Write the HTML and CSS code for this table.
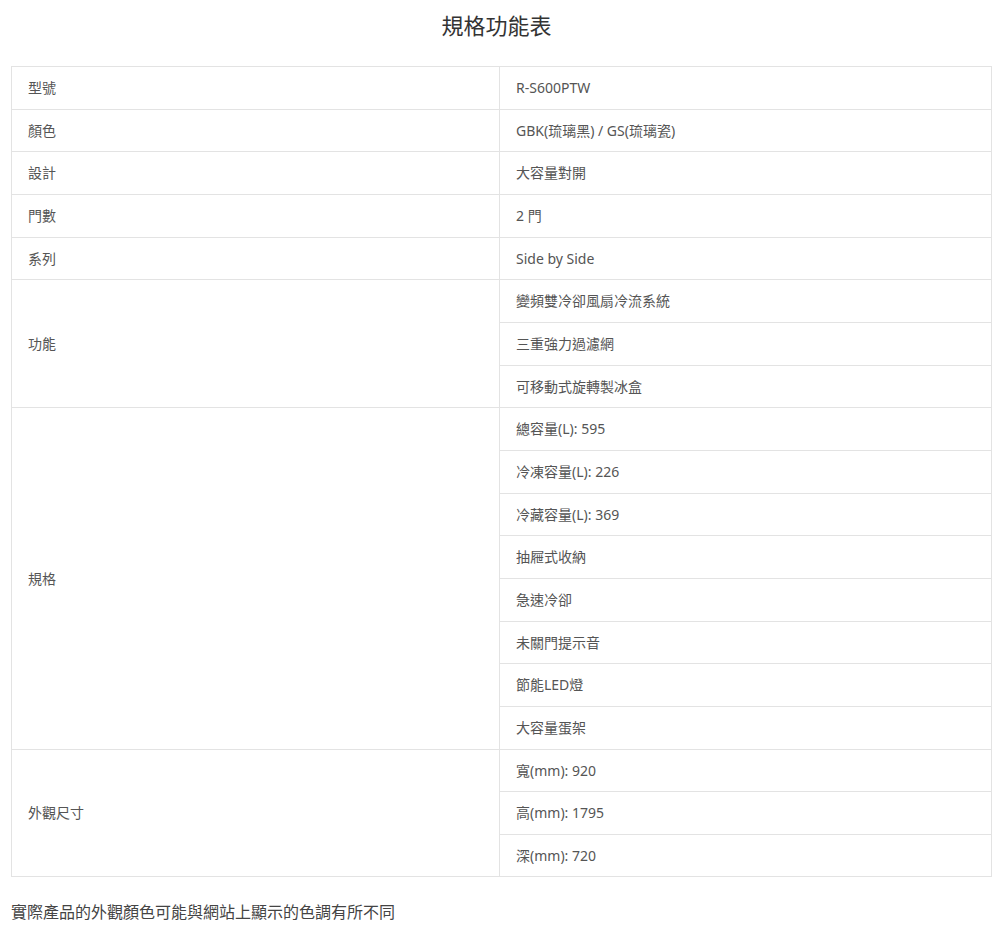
FILE: index.html
```html
<!DOCTYPE html>
<html lang="zh-Hant">
<head>
<meta charset="utf-8">
<title>規格功能表</title>
<link rel="stylesheet" href="styles.css">
</head>
<body>
<div class="page">
  <h2 class="title">規格功能表</h2>
  <table class="spec">
    <tbody>
      <tr><td class="k"><div class="c">型號</div></td><td class="v"><div class="c">R-S600PTW</div></td></tr>
      <tr><td class="k"><div class="c">顏色</div></td><td class="v"><div class="c">GBK(琉璃黑) / GS(琉璃瓷)</div></td></tr>
      <tr><td class="k"><div class="c">設計</div></td><td class="v"><div class="c">大容量對開</div></td></tr>
      <tr><td class="k"><div class="c">門數</div></td><td class="v"><div class="c">2 門</div></td></tr>
      <tr><td class="k"><div class="c">系列</div></td><td class="v"><div class="c">Side by Side</div></td></tr>
      <tr><td class="k" rowspan="3"><div class="c">功能</div></td><td class="v"><div class="c">變頻雙冷卻風扇冷流系統</div></td></tr>
      <tr><td class="v"><div class="c">三重強力過濾網</div></td></tr>
      <tr><td class="v"><div class="c">可移動式旋轉製冰盒</div></td></tr>
      <tr><td class="k" rowspan="8"><div class="c">規格</div></td><td class="v"><div class="c">總容量(L): 595</div></td></tr>
      <tr><td class="v"><div class="c">冷凍容量(L): 226</div></td></tr>
      <tr><td class="v"><div class="c">冷藏容量(L): 369</div></td></tr>
      <tr><td class="v"><div class="c">抽屜式收納</div></td></tr>
      <tr><td class="v"><div class="c">急速冷卻</div></td></tr>
      <tr><td class="v"><div class="c">未關門提示音</div></td></tr>
      <tr><td class="v"><div class="c">節能LED燈</div></td></tr>
      <tr><td class="v"><div class="c">大容量蛋架</div></td></tr>
      <tr><td class="k" rowspan="3"><div class="c">外觀尺寸</div></td><td class="v"><div class="c">寬(mm): 920</div></td></tr>
      <tr><td class="v"><div class="c">高(mm): 1795</div></td></tr>
      <tr><td class="v"><div class="c">深(mm): 720</div></td></tr>
    </tbody>
  </table>
  <p class="note">實際產品的外觀顏色可能與網站上顯示的色調有所不同</p>
</div>
</body>
</html>
```

FILE: styles.css
```css
html, body {
  margin: 0;
  padding: 0;
  background: #fff;
}
body {
  font-family: "Noto Sans", "Noto Sans CJK TC", sans-serif;
  color: #555;
}
.page {
  padding: 0 8px 0 11px;
}
.title {
  margin: 0;
  padding-top: 10px;
  height: 56px;
  font-size: 22px;
  line-height: 30px;
  font-weight: normal;
  text-align: center;
  color: #333;
  text-indent: -10px;
}
.spec {
  width: 981px;
  border-collapse: collapse;
  font-size: 14px;
}
.spec td {
  border: 1px solid #e3e3e3;
  padding: 0 16px;
  vertical-align: middle;
  text-align: left;
}
.spec .c {
  height: 41.67px;
  line-height: 41.67px;
  overflow: hidden;
  white-space: nowrap;
}
.spec .k {
  width: 455px;
}
.note {
  margin: 23px 0 0;
  font-size: 16px;
  line-height: 24px;
  color: #444;
}
```
